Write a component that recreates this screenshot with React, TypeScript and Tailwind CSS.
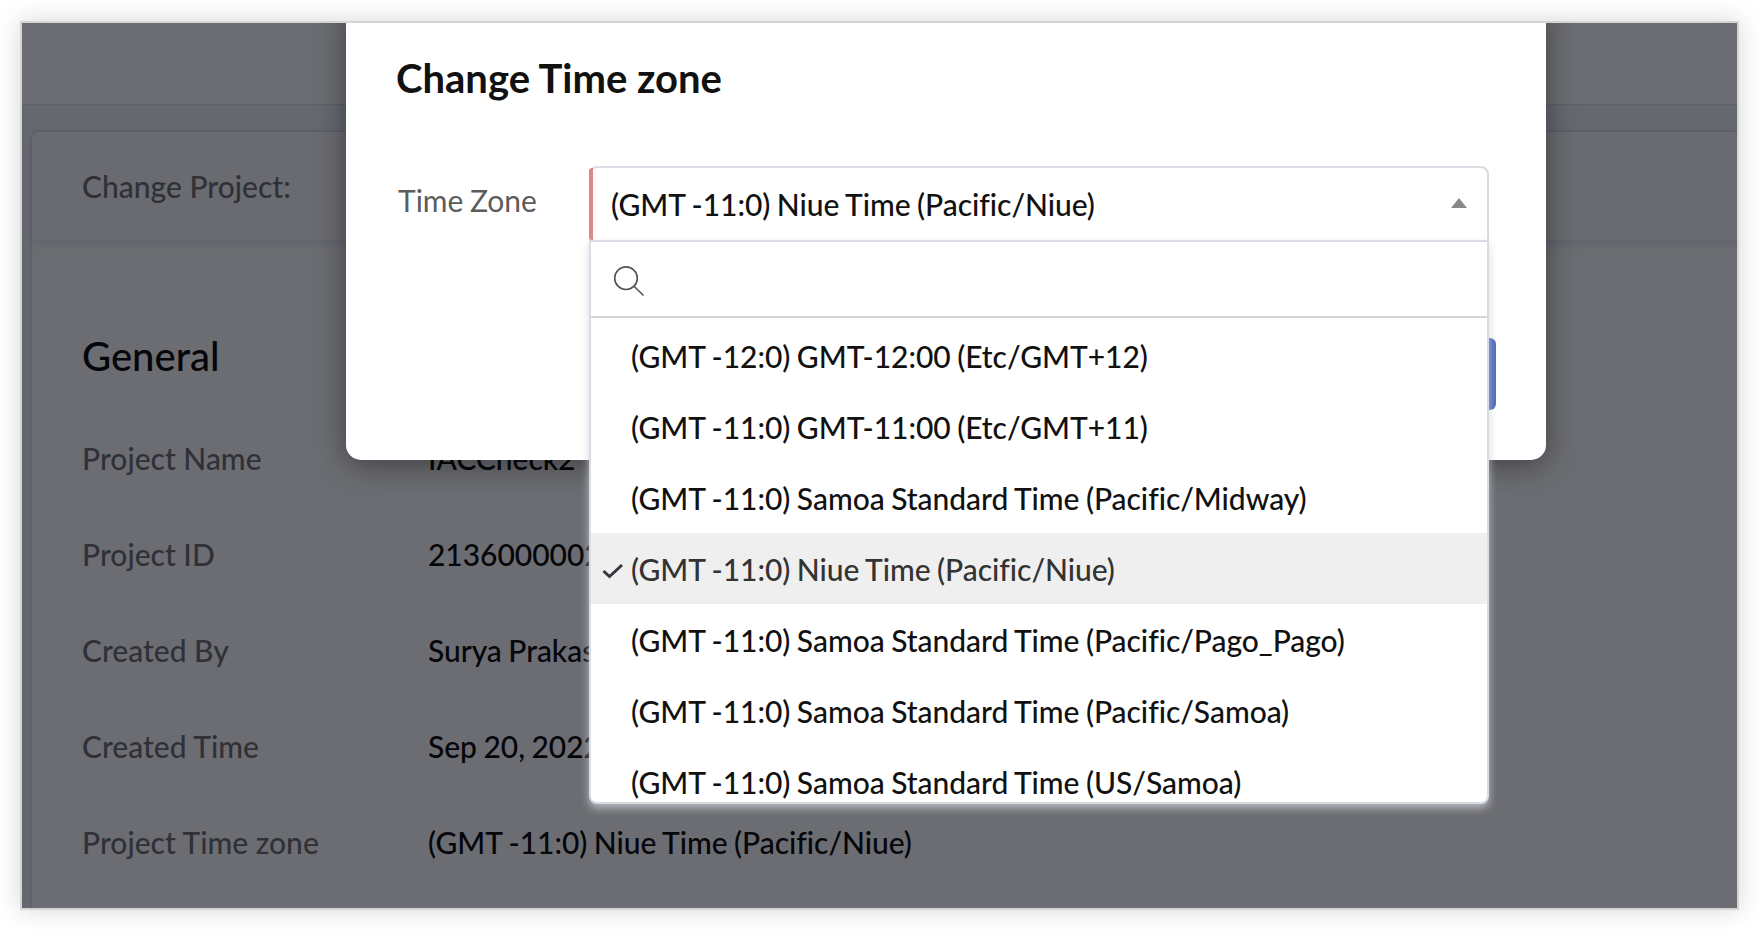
interface ProjectField {
  label: string;
  value: string;
}

const fields: ProjectField[] = [
  { label: "Project Name", value: "IACCheck2" },
  { label: "Project ID", value: "2136000002" },
  { label: "Created By", value: "Surya Prakas" },
  { label: "Created Time", value: "Sep 20, 2022" },
  {
    label: "Project Time zone",
    value: "(GMT -11:0) Niue Time (Pacific/Niue)",
  },
];

const selectedZone = "(GMT -11:0) Niue Time (Pacific/Niue)";

const zones: string[] = [
  "(GMT -12:0) GMT-12:00 (Etc/GMT+12)",
  "(GMT -11:0) GMT-11:00 (Etc/GMT+11)",
  "(GMT -11:0) Samoa Standard Time (Pacific/Midway)",
  "(GMT -11:0) Niue Time (Pacific/Niue)",
  "(GMT -11:0) Samoa Standard Time (Pacific/Pago_Pago)",
  "(GMT -11:0) Samoa Standard Time (Pacific/Samoa)",
  "(GMT -11:0) Samoa Standard Time (US/Samoa)",
];

function App() {
  return (
    <div className="h-[930px] w-[1760px] overflow-hidden bg-white pt-[21px] pl-5 font-['Lato',sans-serif] text-[30px] leading-9 font-medium">
      <div className="relative h-[889px] w-[1719px] border-2 border-[#d5d5d6] shadow-[0_0_24px_rgba(0,0,0,0.16)]">
        <div className="relative h-full w-full overflow-hidden">
          <ProjectPage />
          <TimeZoneDialog />
          <ZoneDropdown />
        </div>
      </div>
    </div>
  );
}

export default App;

function ProjectPage() {
  return (
    <div className="flex h-full flex-col bg-[#666870]">
      <div className="h-[82px] shrink-0 border-b border-[#5f6066] bg-[#6c6d72]" />
      <div className="mt-[25px] ml-2 flex grow flex-col rounded-tl-lg border-t-2 border-l-2 border-[#5f616b] bg-[#6c6d72]">
        <div className="flex h-[108px] shrink-0 items-center rounded-tl-md bg-[#6a6b70] pl-[50px] text-[#303136] shadow-[0_3px_8px_rgba(88,90,104,0.6)]">
          Change Project:
        </div>
        <h2 className="mt-[92px] pl-[50px] text-[40px] leading-[48px] text-[#050609]">
          General
        </h2>
        <div className="mt-[30px] flex flex-col">
          {fields.map((field) => (
            <FieldRow
              key={field.label}
              label={field.label}
              value={field.value}
            />
          ))}
        </div>
      </div>
    </div>
  );
}

function FieldRow({ label, value }: ProjectField) {
  return (
    <div className="flex h-24 items-center pl-[50px]">
      <span className="w-[346px] text-[#303136]">{label}</span>
      <span className="tracking-[-0.04px] text-[#050609] [word-spacing:-1px]">
        {value}
      </span>
    </div>
  );
}

function TimeZoneDialog() {
  return (
    <div className="absolute top-[-20px] left-[324px] h-[457px] w-[1200px] rounded-[15px] bg-white pt-[51px] pl-[50px] shadow-[0_5px_30px_rgba(0,0,0,0.42)]">
      <h1 className="text-[40px] leading-[48px] font-bold text-[#111]">
        Change Time zone
      </h1>
      <div className="mt-[64px] flex">
        <span className="mt-4 w-[193px] pl-[2px] font-normal text-[#5c5c5c] [word-spacing:-1px]">
          Time Zone
        </span>
        <div className="flex h-[76px] w-[900px] items-center rounded-t-lg border-2 border-[#dadce4]">
          <div className="-ml-[2px] h-[72px] w-1 shrink-0 rounded-l-[3px] bg-[#dd8686]" />
          <span className="grow pl-[18px] tracking-[-0.04px] text-[#111] [word-spacing:-1px]">
            {selectedZone}
          </span>
          <svg
            width="16"
            height="10"
            viewBox="0 0 16 10"
            className="mr-5 mb-[2px]"
          >
            <path d="M8 0L16 10H0Z" fill="#888" />
          </svg>
        </div>
      </div>
      <div className="mt-24 mr-[50px] flex justify-end">
        <div className="h-[72px] w-[140px] rounded-md bg-[#4c69c0]" />
      </div>
    </div>
  );
}

function ZoneDropdown() {
  return (
    <div className="absolute top-[217px] left-[567px] flex h-[564px] w-[900px] flex-col overflow-hidden rounded-b-lg border-2 border-[#dadce4] bg-white shadow-[0_4px_8px_rgba(206,209,218,0.8)]">
      <div className="flex h-[76px] shrink-0 items-center border-b-2 border-[#d5d5d6] pl-[22px]">
        <svg
          width="32"
          height="32"
          viewBox="0 0 32 32"
          fill="none"
          stroke="#50535a"
          strokeWidth="1.6"
          className="mt-[3px]"
        >
          <circle cx="13" cy="13.2" r="11.3" />
          <path d="M21 21.2L30.5 30.5" />
        </svg>
      </div>
      <div className="flex flex-col pt-[2px]">
        {zones.map((zone) => (
          <ZoneOption key={zone} zone={zone} selected={zone === selectedZone} />
        ))}
      </div>
    </div>
  );
}

function ZoneOption({ zone, selected }: { zone: string; selected: boolean }) {
  return (
    <div
      className={
        selected
          ? "flex h-[71px] shrink-0 items-center bg-[#efefef] text-[#333]"
          : "flex h-[71px] shrink-0 items-center text-[#111]"
      }
    >
      <div className="flex w-10 shrink-0 pl-[11px]">
        {selected && (
          <svg
            width="22"
            height="16"
            viewBox="0 0 22 16"
            fill="none"
            stroke="#343842"
            strokeWidth="3"
            className="mt-[4px]"
          >
            <path d="M1.5 8L7.5 13.5L20 2" />
          </svg>
        )}
      </div>
      <span className="tracking-[-0.04px] whitespace-nowrap [word-spacing:-1px]">
        {zone}
      </span>
    </div>
  );
}
